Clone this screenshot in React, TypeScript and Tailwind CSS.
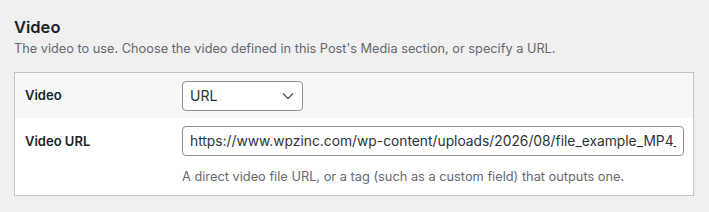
export default function App() {
  return (
    <div className="min-h-screen bg-[#f0f0f1] px-[14px] pt-[16px] font-['Inter','Liberation_Sans',sans-serif] text-[#1d2327]">
      <h3 className="text-[16.5px] font-semibold leading-[22px]">Video</h3>
      <p className="mt-[2px] text-[12.75px] leading-[18px] text-[#646970]">
        The video to use. Choose the video defined in this Post's Media section, or specify a URL.
      </p>
      <div className="mt-[14px] w-[680px] border border-[#c3c4c7] bg-white">
        <div className="flex h-[45px] items-center bg-[#f6f7f7]">
          <label className="w-[167px] pl-[10px] text-[13px] font-semibold">Video</label>
          <div className="relative">
            <select
              defaultValue="url"
              className="h-[30px] w-[121px] appearance-none rounded-[4px] border border-[#8c8f94] bg-white pl-[7px] text-[14px] text-[#2c3338] outline-none"
            >
              <option value="url">URL</option>
            </select>
            <svg
              className="pointer-events-none absolute right-[9px] top-[11px]"
              width="12"
              height="8"
              viewBox="0 0 12 8"
              fill="none"
              stroke="#50575e"
              strokeWidth="1.3"
            >
              <path d="M1 1.5l5 5 5-5" />
            </svg>
          </div>
        </div>
        <div className="flex pb-[9px] pt-[8px]">
          <label className="w-[167px] pl-[10px] pt-[6px] text-[13px] font-semibold">Video URL</label>
          <div>
            <input
              type="text"
              readOnly
              value="https://www.wpzinc.com/wp-content/uploads/2026/08/file_example_MP4_480_1_5MG.mp4"
              className="h-[30px] w-[502px] rounded-[4px] border border-[#8c8f94] bg-white px-[7px] text-[13.8px] text-[#2c3338] outline-none"
            />
            <p className="mt-[12px] text-[12.8px] leading-[18px] text-[#646970]">
              A direct video file URL, or a tag (such as a custom field) that outputs one.
            </p>
          </div>
        </div>
      </div>
    </div>
  )
}
